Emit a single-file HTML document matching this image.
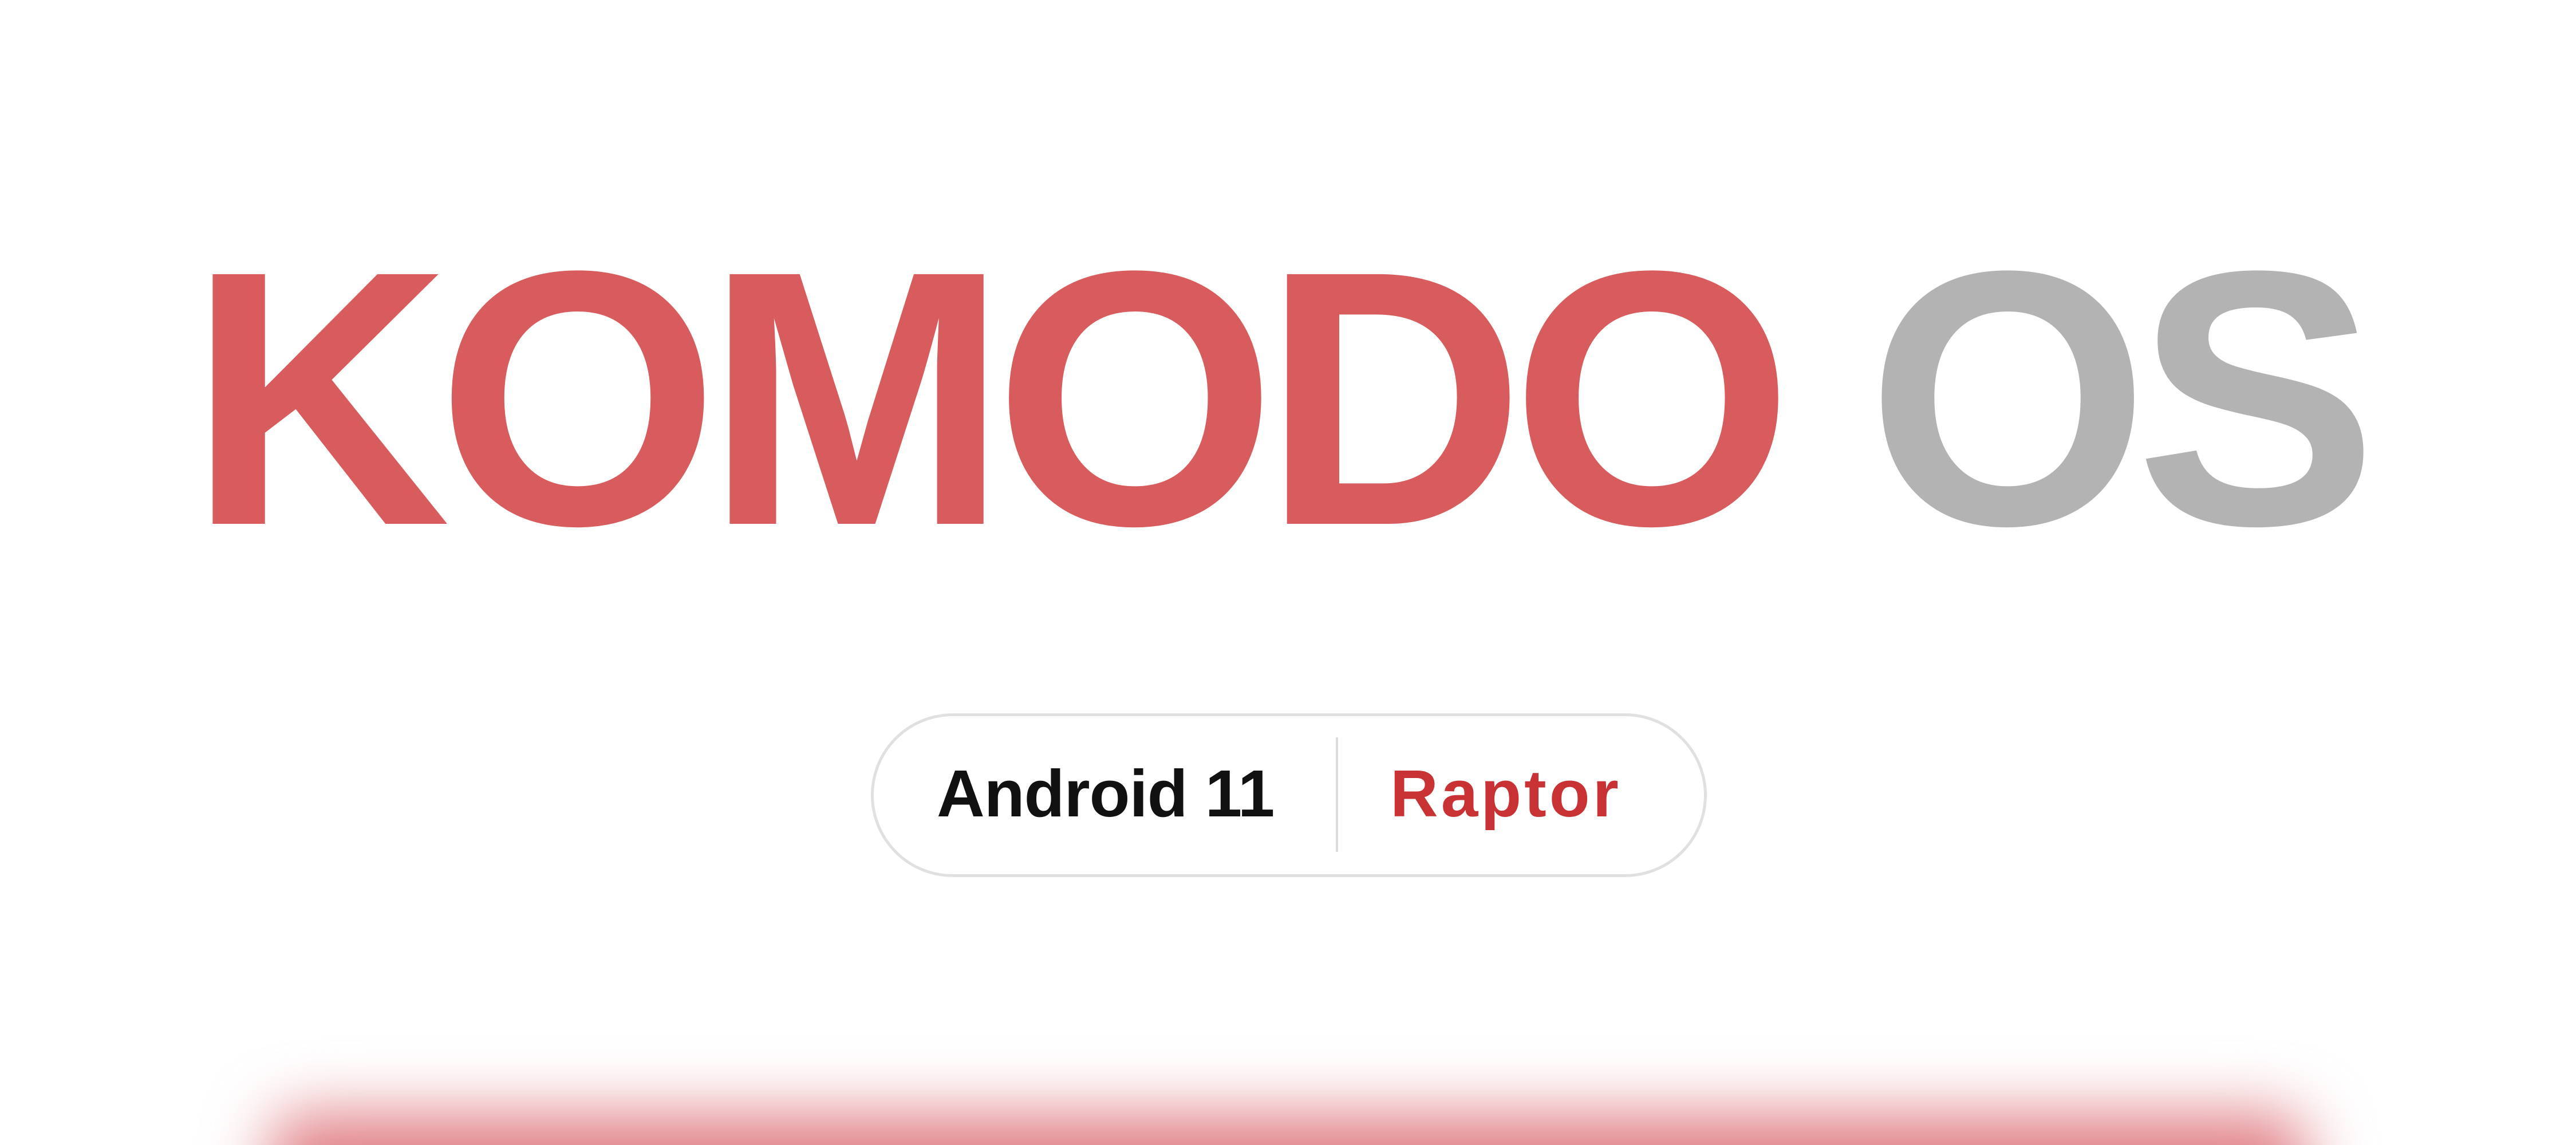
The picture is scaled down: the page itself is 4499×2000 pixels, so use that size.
<!DOCTYPE html>
<html><head><meta charset="utf-8"><style>
html,body{margin:0;padding:0;background:#fff;width:4499px;height:2000px;overflow:hidden;position:relative;font-family:"Liberation Sans",sans-serif}
.t{position:absolute;left:329px;top:379px;font-size:634px;line-height:1;font-weight:bold;color:#d85b5e;white-space:nowrap;letter-spacing:-24px}
.t span{color:#b3b3b3}
.pill{position:absolute;left:1521px;top:1246px;width:1450px;height:276px;border:5px solid #e0e0e0;border-radius:145px;box-sizing:content-box}
.a{position:absolute;font-weight:bold;font-size:116px;line-height:1;white-space:nowrap}
.clip{position:absolute;left:0;top:0;width:4499px;height:2000px;overflow:hidden}
.glow{position:absolute;left:470px;top:1945px;width:3560px;height:200px;background:#e07f85;filter:blur(55px);border-radius:60px}
</style></head><body>
<div class="t">KOMODO <span>OS</span></div>
<div class="pill"></div>
<div class="a" style="left:1636px;top:1328px;color:#111;letter-spacing:-1px">Android 11</div>
<div style="position:absolute;left:2333px;top:1288px;width:4px;height:200px;background:#dcdcdc"></div>
<div class="a" style="left:2428px;top:1328px;color:#c83235;letter-spacing:5px">Raptor</div>
<div class="clip"><div class="glow"></div></div>
</body></html>
